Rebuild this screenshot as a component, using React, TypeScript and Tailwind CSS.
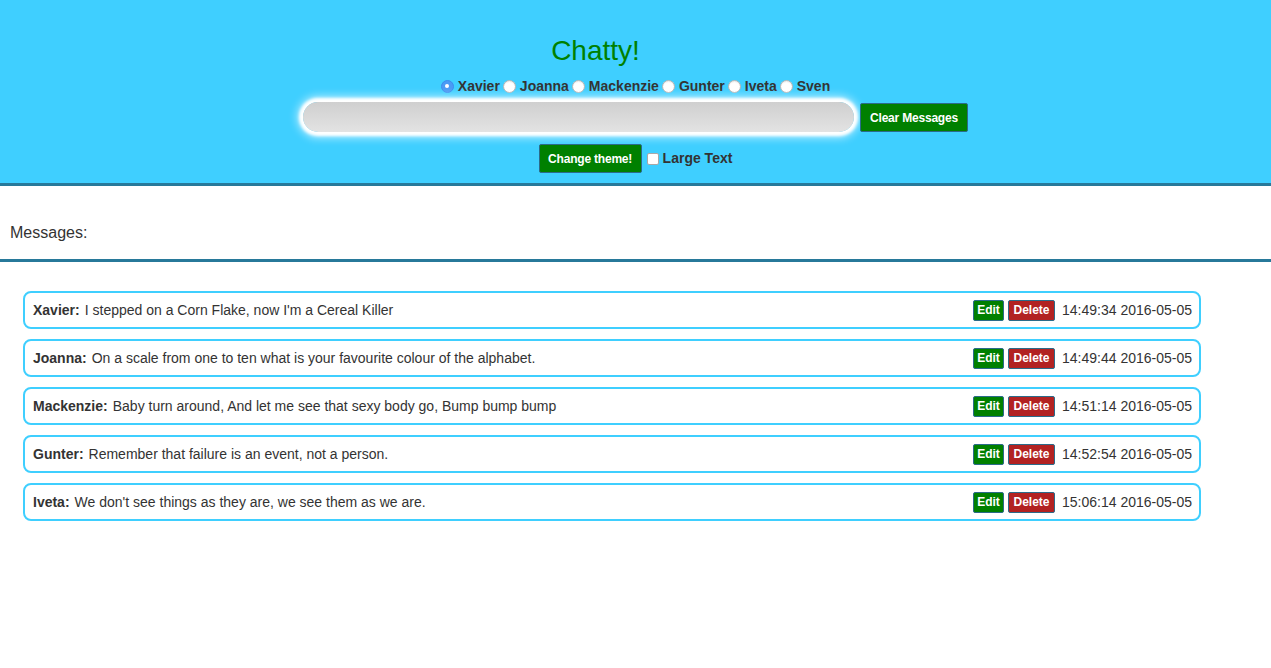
const users = ["Xavier", "Joanna", "Mackenzie", "Gunter", "Iveta", "Sven"];

const messages = [
  { user: "Xavier", text: "I stepped on a Corn Flake, now I'm a Cereal Killer", time: "14:49:34 2016-05-05" },
  { user: "Joanna", text: "On a scale from one to ten what is your favourite colour of the alphabet.", time: "14:49:44 2016-05-05" },
  { user: "Mackenzie", text: "Baby turn around, And let me see that sexy body go, Bump bump bump", time: "14:51:14 2016-05-05" },
  { user: "Gunter", text: "Remember that failure is an event, not a person.", time: "14:52:54 2016-05-05" },
  { user: "Iveta", text: "We don't see things as they are, we see them as we are.", time: "15:06:14 2016-05-05" },
];

function Radio({ checked }: { checked: boolean }) {
  return checked ? (
    <span className="grid h-[13px] w-[13px] place-items-center rounded-full border border-[#3b8df0] bg-[#4a9bf5]">
      <span className="block h-[4px] w-[4px] rounded-full bg-white" />
    </span>
  ) : (
    <span className="block h-[13px] w-[13px] rounded-full border border-[#b5b5b5] bg-white shadow-[inset_0_1px_1px_rgba(0,0,0,0.08)]" />
  );
}

export default function App() {
  return (
    <div className="min-h-screen bg-white font-['Liberation_Sans',Arial,sans-serif] text-[#333]">
      <header className="flex flex-col items-center border-b-[3px] border-[#27799a] bg-[#3fcfff] pb-[10px] pt-[35px]">
        <h1 className="pr-[80px] text-[28px] leading-[32px] text-[#008000]">Chatty!</h1>

        <div className="mt-[10px] flex h-[18px] items-center text-[14px] font-bold">
          {users.map((u, i) => (
            <label key={u} className="flex items-center">
              <span className={i === 0 ? "block" : "ml-[3px] block"}>
                <Radio checked={i === 0} />
              </span>
              <span className="ml-[4px]">{u}</span>
            </label>
          ))}
        </div>

        <div className="mt-[6px] flex items-center">
          <div className="h-[30px] w-[551px] rounded-full bg-gradient-to-b from-[#cfcfcf] to-[#e3e3e3] shadow-[0_0_3px_4px_#ffffff,0_0_9px_6px_rgba(255,255,255,0.6)]" />
          <button
            type="button"
            className="ml-[6px] mt-[2px] h-[29px] w-[108px] rounded-[2px] border border-[#2b6b8a] bg-[#008000] text-[12px] font-bold tracking-[-0.2px] text-white"
          >
            Clear Messages
          </button>
        </div>

        <div className="mt-[12px] flex items-center">
          <button
            type="button"
            className="h-[29px] w-[103px] rounded-[2px] border border-[#2b6b8a] bg-[#008000] text-[12px] font-bold tracking-[-0.2px] text-white"
          >
            Change theme!
          </button>
          <span className="ml-[5px] h-[12px] w-[12px] rounded-[2px] border border-[#a8a8a8] bg-white" />
          <span className="ml-[4px] text-[14px] font-bold">Large Text</span>
        </div>
      </header>

      <div className="flex h-[76px] items-end border-b-[3px] border-[#27799a] px-[10px] pb-[16px]">
        <h2 className="text-[16px] leading-[20px]">Messages:</h2>
      </div>

      <ul className="ml-[23px] mt-[29px] flex w-[1178px] flex-col gap-[10px]">
        {messages.map((m) => (
          <li
            key={m.time}
            className="flex h-[38px] items-center rounded-[8px] border-2 border-[#3fcfff] pl-[8px] pr-[7px] text-[14px]"
          >
            <span className="font-bold">{m.user}:</span>
            <span className="ml-[5px] flex-1">{m.text}</span>
            <button
              type="button"
              className="h-[21px] w-[31px] rounded-[2px] border border-[#2b6b8a] bg-[#008000] text-[12px] font-bold text-white"
            >
              Edit
            </button>
            <button
              type="button"
              className="ml-[4px] h-[21px] w-[47px] rounded-[2px] border border-[#2b6b8a] bg-[#b22222] text-[12px] font-bold text-white"
            >
              Delete
            </button>
            <span className="ml-[7px]">{m.time}</span>
          </li>
        ))}
      </ul>
    </div>
  );
}
